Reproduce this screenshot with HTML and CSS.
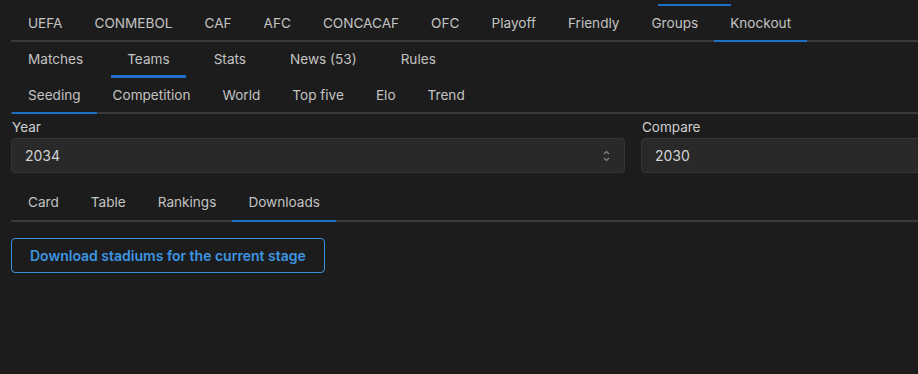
FILE: index.html
```html
<!DOCTYPE html>
<html lang="en">
<head>
    <meta charset="UTF-8">
    <meta name="viewport" content="width=device-width, initial-scale=1.0">
    <title>Tournament - Downloads</title>
    <link rel="stylesheet" href="styles.css">
</head>
<body>
    <div class="page">
        <span class="ghost-indicator"></span>

        <!-- confederation tabs -->
        <nav class="tabs tabs-main">
            <a class="tab">UEFA</a>
            <a class="tab">CONMEBOL</a>
            <a class="tab">CAF</a>
            <a class="tab">AFC</a>
            <a class="tab">CONCACAF</a>
            <a class="tab">OFC</a>
            <a class="tab">Playoff</a>
            <a class="tab">Friendly</a>
            <a class="tab">Groups</a>
            <a class="tab active">Knockout</a>
        </nav>

        <nav class="tabs tabs-section">
            <a class="tab">Matches</a>
            <a class="tab active">Teams</a>
            <a class="tab">Stats</a>
            <a class="tab">News (53)</a>
            <a class="tab">Rules</a>
        </nav>

        <nav class="tabs tabs-sub">
            <a class="tab active">Seeding</a>
            <a class="tab">Competition</a>
            <a class="tab">World</a>
            <a class="tab">Top five</a>
            <a class="tab">Elo</a>
            <a class="tab">Trend</a>
        </nav>

        <div class="filters">
            <div class="field">
                <label>Year</label>
                <div class="select">
                    <span>2034</span>
                    <svg class="chevrons" width="7" height="12" viewBox="0 0 7 12">
                        <path d="M1 4 L3.5 1.5 L6 4 M1 8 L3.5 10.5 L6 8" fill="none" stroke="#8a8a8a" stroke-width="1.1"/>
                    </svg>
                </div>
            </div>
            <div class="field">
                <label>Compare</label>
                <div class="select">
                    <span>2030</span>
                </div>
            </div>
        </div>

        <nav class="tabs tabs-view">
            <a class="tab">Card</a>
            <a class="tab">Table</a>
            <a class="tab">Rankings</a>
            <a class="tab active">Downloads</a>
        </nav>

        <button class="btn-outline">Download stadiums for the current stage</button>
    </div>
</body>
</html>
```

FILE: styles.css
```css
html, body {
    margin: 0;
    padding: 0;
    background-color: #1c1c1c;
    overflow: hidden;
}

body {
    font-family: Inter, "Noto Sans", sans-serif;
    font-size: 14px;
    line-height: 20px;
    color: #c3c3c3;
}

.page {
    position: relative;
    width: 1244px;
    padding-left: 11px;
}

.ghost-indicator {
    position: absolute;
    top: 4px;
    left: 658px;
    width: 73px;
    height: 2px;
    background-color: #1f6fc9;
}

.tabs {
    display: flex;
    padding-left: 1px;
    font-size: 13.6px;
}

.tab {
    display: block;
    padding: 0 16px;
    white-space: nowrap;
    cursor: pointer;
    border-bottom: 2px solid transparent;
}

.tab.active {
    border-bottom-color: #1f6fc9;
}

/* top row */
.tabs-main {
    border-bottom: 2px solid #3a3a3a;
}

.tabs-main .tab {
    padding-top: 13px;
    padding-bottom: 7px;
    margin-bottom: -2px;
}

/* second row, no rule line */
.tabs-section {
    gap: 12px;
}

.tabs-section .tab {
    padding-top: 7px;
    padding-bottom: 6px;
    border-bottom-width: 3px;
}

.tabs-sub {
    border-bottom: 2px solid #3a3a3a;
}

.tabs-sub .tab {
    padding-top: 7px;
    padding-bottom: 7px;
    margin-bottom: -2px;
}

.filters {
    display: grid;
    grid-template-columns: 614px 614px;
    gap: 16px;
    margin-top: 4px;
}

.field label {
    display: block;
    font-size: 13.5px;
    line-height: 18px;
    color: #cfcfcf;
    margin-bottom: 2px;
    padding-left: 1px;
}

.select {
    display: flex;
    align-items: center;
    justify-content: space-between;
    box-sizing: border-box;
    height: 35px;
    padding: 1px 14px 0 13px;
    background-color: #292929;
    border: 1px solid #363636;
    border-radius: 4px;
    color: #d2d2d2;
}

.chevrons {
    display: block;
}

.tabs-view {
    margin-top: 11px;
    border-bottom: 2px solid #3a3a3a;
}

.tabs-view .tab {
    padding-top: 8px;
    padding-bottom: 8px;
    margin-bottom: -2px;
}

.btn-outline {
    display: block;
    margin-top: 16px;
    height: 35px;
    padding: 0 18px;
    background-color: transparent;
    border: 1px solid #3b8fdb;
    border-radius: 4px;
    color: #3d95e2;
    font-family: Inter, "Noto Sans", sans-serif;
    font-size: 14px;
    font-weight: 600;
    cursor: pointer;
}
```
